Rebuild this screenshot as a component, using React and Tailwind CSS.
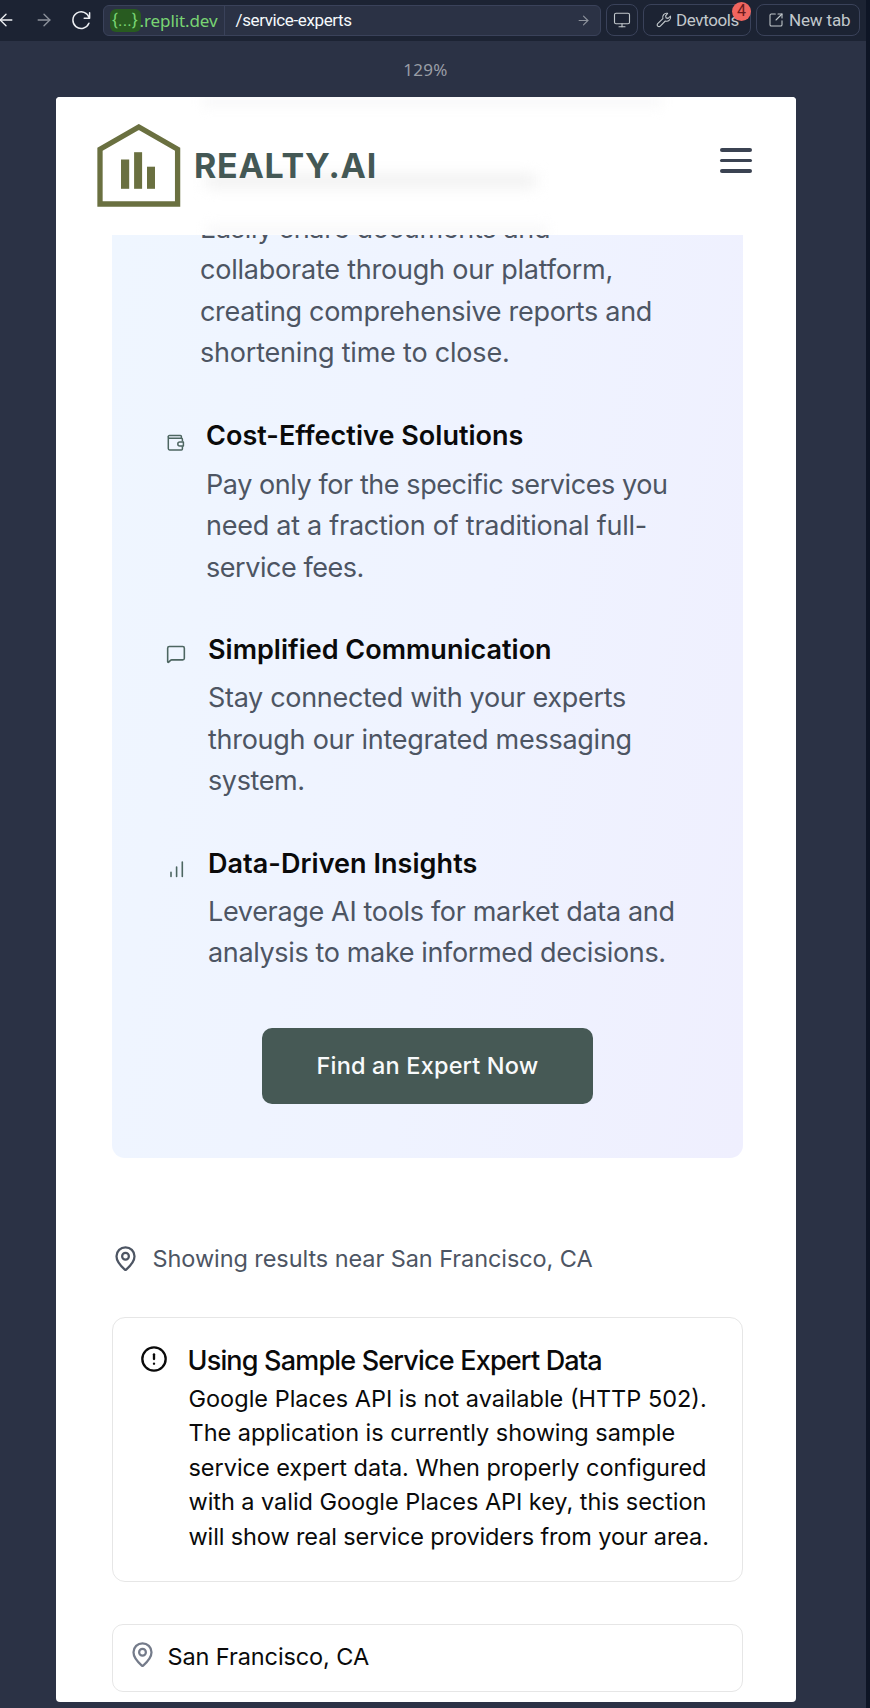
import React from "react";
import { ArrowLeft, ArrowRight, CircleAlert, MapPin, MessageSquare, Monitor, SquareArrowOutUpRight } from "lucide-react";

function Line({ className = "", children }) {
  return <div className={`whitespace-nowrap ${className}`}>{children}</div>;
}

function ReloadIcon() {
  return (
    <svg className="h-5 w-5" viewBox="0 0 20 20" fill="none" stroke="#eef0f4" strokeWidth="1.5" strokeLinecap="round" strokeLinejoin="round">
      <path d="M18.6 2.8v5.4h-5.4" />
      <path d="M18.2 7.9A8.3 8.3 0 1 0 17.9 13.3" />
    </svg>
  );
}

function WrenchIcon() {
  return (
    <svg className="h-4 w-4" viewBox="0 0 16 16" fill="none" stroke="#c2c8cc" strokeWidth="1.1" strokeLinejoin="round">
      <path d="M11.6 1.4a4 4 0 0 0-4.7 5.3L1.7 11.6a1.7 1.7 0 0 0 2.6 2.5l5-5.1a4 4 0 0 0 5.2-4.9l-2.4 2.3-2-.5-.5-2z" />
    </svg>
  );
}

function Logo() {
  return (
    <svg className="h-[84px] w-[84px]" viewBox="97 124 84 84" fill="#6a7040">
      <path d="M100 204V149.3L138.8 127l38.8 22.3V204z" fill="none" stroke="#6a7040" strokeWidth="5.3" />
      <rect x="121" y="159.5" width="8.2" height="29.3" />
      <rect x="134.1" y="152.2" width="8" height="36.6" />
      <rect x="147" y="166.7" width="8" height="22.1" />
    </svg>
  );
}

function WalletIcon() {
  return (
    <svg className="h-[18px] w-[18px]" viewBox="0 0 18 18" fill="none" stroke="#4d6661" strokeWidth="1.5" strokeLinejoin="round">
      <path d="M15.4 7.6V5.2a1 1 0 0 0-1-1H2.6A1.3 1.3 0 0 1 1.3 3v11.6a1.3 1.3 0 0 0 1.3 1.3h11.8a1 1 0 0 0 1-1v-2.6" />
      <path d="M1.3 3A1.3 1.3 0 0 1 2.6 1.4h10.8a1 1 0 0 1 1 1v1.8" />
      <path d="M16.4 8v4h-3.6a2 2 0 0 1 0-4z" />
    </svg>
  );
}

function BarsIcon() {
  return (
    <svg className="h-[18px] w-[14px]" viewBox="0 0 14 18" stroke="#4d6661" strokeWidth="1.6" strokeLinecap="round">
      <path d="M1 12.2v4.2M6.6 7v9.4M12.3 2v14.4" />
    </svg>
  );
}

function TopBar() {
  return (
    <div className="flex h-[41px] w-[866px] shrink-0 items-start bg-[#1c2333]">
      <div className="flex h-10 w-[102.5px] shrink-0 items-center">
        <ArrowLeft className="-ml-1 h-5 w-5 shrink-0 text-[#eef0f4]" strokeWidth={1.6} />
        <ArrowRight className="ml-[18px] h-5 w-5 shrink-0 text-[#8d929c]" strokeWidth={1.6} />
        <div className="ml-[17px] shrink-0"><ReloadIcon /></div>
      </div>
      <div className="mt-[5px] flex h-[31px] w-[498px] shrink-0 items-center rounded-md border border-[#3a425a] bg-[#2b3245]">
        <div className="flex h-full w-[121px] shrink-0 items-center border-r border-[#3a425a] pl-[6px] text-[17px] text-[#79d473]">
          <span className="flex h-[23px] w-[31px] items-center justify-center rounded-md bg-[#285b20] font-[Roboto,sans-serif] tracking-[0.2px]">{"{...}"}</span>
          <span className="-ml-px font-['Noto_Sans',sans-serif] leading-none tracking-[-0.1px]">.replit.dev</span>
        </div>
        <span className="pl-[11px] font-[Roboto,sans-serif] text-[17px] leading-none font-[450] tracking-[-0.38px] text-[#f5f9fc]">/service-experts</span>
        <ArrowRight className="mr-[9px] ml-auto h-[15px] w-[15px] text-[#8d929c]" strokeWidth={1.8} />
      </div>
      <div className="mt-1 ml-[5.5px] flex h-8 w-8 shrink-0 items-center justify-center rounded-lg border border-[#3a425a]">
        <Monitor className="h-[18px] w-[18px] text-[#c2c8cc]" strokeWidth={1.5} />
      </div>
      <div className="relative mt-1 ml-[5px] flex h-8 w-[108px] shrink-0 items-center rounded-lg border border-[#3a425a] pl-3">
        <WrenchIcon />
        <span className="ml-[4px] font-[Roboto,sans-serif] text-[17px] leading-none font-[450] tracking-[-0.38px] text-[#c2c8cc]">Devtools</span>
        <span className="absolute -top-[3.5px] right-[-1px] flex h-[19px] w-[19px] items-center justify-center rounded-full bg-[#f0655f] font-[Roboto,sans-serif] text-base leading-none text-[#6b1a1c]">4</span>
      </div>
      <div className="mt-1 ml-[5px] flex h-8 w-[104px] shrink-0 items-center rounded-lg border border-[#3a425a] pl-[11px]">
        <SquareArrowOutUpRight className="h-4 w-4 text-[#c2c8cc]" strokeWidth={1.6} />
        <span className="ml-[5px] font-[Roboto,sans-serif] text-[17px] leading-none font-[450] tracking-[-0.15px] text-[#c2c8cc]">New tab</span>
      </div>
    </div>
  );
}

function SiteHeader() {
  return (
    <header className="relative flex h-[138.5px] shrink-0 items-center overflow-hidden bg-white pr-[44px] pl-[41px]">
      <div className="absolute top-[1px] left-[146px] h-[8px] w-[460px] bg-[#f6f6f7] blur-[6px]" />
      <div className="absolute top-[77px] left-[150px] h-[14px] w-[330px] bg-[#f1f1f1] blur-[7px]" />
      <div className="absolute top-[128px] left-[150px] h-[12px] w-[342px] bg-[#f8f8f9] blur-[6px]" />
      <div className="relative"><Logo /></div>
      <span className="relative ml-[13px] text-[34px] leading-[34px] font-bold tracking-[0.72px] text-[#445855]">REALTY.AI</span>
      <div className="relative -mt-[10.5px] ml-auto flex flex-col gap-[7px]">
        <div className="h-[3.4px] w-8 rounded-full bg-[#3b4352]" />
        <div className="h-[3.4px] w-8 rounded-full bg-[#3b4352]" />
        <div className="h-[3.4px] w-8 rounded-full bg-[#3b4352]" />
      </div>
    </header>
  );
}

function Benefits() {
  return (
    <section className="ml-14 h-[922.5px] w-[631px] shrink-0 overflow-hidden rounded-b-[13px] bg-[linear-gradient(100deg,#eff6ff,#eff3ff_55%,#efeffe)] text-[27px] leading-[41.3px] text-[#4d5563]">
      <div className="-mt-[27px] pl-[88px]">
        <Line className="tracking-[-0.28px]">Easily share documents and</Line>
        <Line className="tracking-[-0.22px]">collaborate through our platform,</Line>
        <Line className="tracking-[-0.3px]">creating comprehensive reports and</Line>
        <Line className="tracking-[-0.2px]">shortening time to close.</Line>
      </div>
      <div className="mt-[42.2px] flex">
        <div className="w-[94px] shrink-0 pt-[19px] pl-[54.5px]"><WalletIcon /></div>
        <div>
          <Line className="font-semibold tracking-[0.03px] text-[#0a0a0a]">Cost-Effective Solutions</Line>
          <div className="mt-[7.5px]">
            <Line className="tracking-[-0.43px]">Pay only for the specific services you</Line>
            <Line className="tracking-[-0.26px]">need at a fraction of traditional full-</Line>
            <Line className="tracking-[-0.45px]">service fees.</Line>
          </div>
        </div>
      </div>
      <div className="mt-[41px] flex">
        <div className="w-[96px] shrink-0 pt-[15px] pl-[53.5px]">
          <MessageSquare className="h-[20px] w-[20px] text-[#4d6661]" strokeWidth={1.9} />
        </div>
        <div>
          <Line className="font-semibold tracking-[0.01px] text-[#0a0a0a]">Simplified Communication</Line>
          <div className="mt-[7px]">
            <Line className="tracking-[-0.32px]">Stay connected with your experts</Line>
            <Line className="tracking-[-0.27px]">through our integrated messaging</Line>
            <Line className="tracking-[-0.4px]">system.</Line>
          </div>
        </div>
      </div>
      <div className="mt-[42px] flex">
        <div className="w-[96px] shrink-0 pt-[16.5px] pl-[57.5px]"><BarsIcon /></div>
        <div>
          <Line className="font-semibold tracking-[0.05px] text-[#0a0a0a]">Data-Driven Insights</Line>
          <div className="mt-[6.3px]">
            <Line className="tracking-[-0.33px]">Leverage AI tools for market data and</Line>
            <Line className="tracking-[-0.36px]">analysis to make informed decisions.</Line>
          </div>
        </div>
      </div>
      <button className="mx-auto mt-[54.6px] flex h-[76px] w-[331px] items-center justify-center rounded-[10px] bg-[#465955] text-[23.5px] font-[450] tracking-[0.17px] text-[#f8fafb]">
        Find an Expert Now
      </button>
    </section>
  );
}

export default function App() {
  return (
    <div className="flex h-[1708px] w-[870px] flex-col overflow-hidden bg-[#0e1525] font-[Inter,sans-serif]">
      <TopBar />
      <div className="flex h-[1667px] w-[866px] shrink-0 flex-col items-start bg-[#2b3245]">
        <div className="h-[55.5px] w-[851px] shrink-0 pt-[17px] text-center font-['Noto_Sans',sans-serif] text-[17px] leading-[24px] tracking-[0.28px] text-[#999da5]">129%</div>
        <main className="ml-14 flex h-[1605px] w-[740px] shrink-0 flex-col overflow-hidden rounded-[4px] bg-white">
          <SiteHeader />
          <Benefits />
          <div className="mx-14 mt-[80.5px] flex h-[41px] shrink-0 items-center text-[#4d5563]">
            <MapPin className="-ml-[0.5px] h-[27px] w-[27px]" strokeWidth={2} />
            <Line className="ml-[14px] text-[23.5px] leading-[41px] tracking-[-0.08px]">Showing results near San Francisco, CA</Line>
          </div>
          <div className="mt-[38px] ml-14 flex h-[265px] w-[631px] shrink-0 rounded-[13px] border border-[#e6e6e6] pt-[25.7px] pl-[26.5px] text-[#0a0a0a]">
            <CircleAlert className="mt-[1px] h-[28px] w-[28px] shrink-0" strokeWidth={2} />
            <div className="ml-[21px]">
              <Line className="-ml-px text-[27px] leading-[34px] font-medium tracking-[-0.82px]">Using Sample Service Expert Data</Line>
              <div className="mt-1 text-[23.5px] leading-[34.5px]">
                <Line className="tracking-[0px]">Google Places API is not available (HTTP 502).</Line>
                <Line className="tracking-[-0.03px]">The application is currently showing sample</Line>
                <Line className="tracking-[-0.03px]">service expert data. When properly configured</Line>
                <Line className="tracking-[-0.05px]">with a valid Google Places API key, this section</Line>
                <Line className="tracking-[-0.12px]">will show real service providers from your area.</Line>
              </div>
            </div>
          </div>
          <div className="mt-[41.5px] ml-14 flex h-[68px] w-[631px] shrink-0 items-center rounded-[11px] border border-[#e6e6e6] pl-[15.5px]">
            <MapPin className="-mt-[6px] h-[27px] w-[27px] text-[#747b8a]" strokeWidth={2} />
            <Line className="-mt-px ml-[12px] text-[23.5px] leading-[34px] tracking-[-0.1px] text-[#0a0a0a]">San Francisco, CA</Line>
          </div>
        </main>
      </div>
    </div>
  );
}
